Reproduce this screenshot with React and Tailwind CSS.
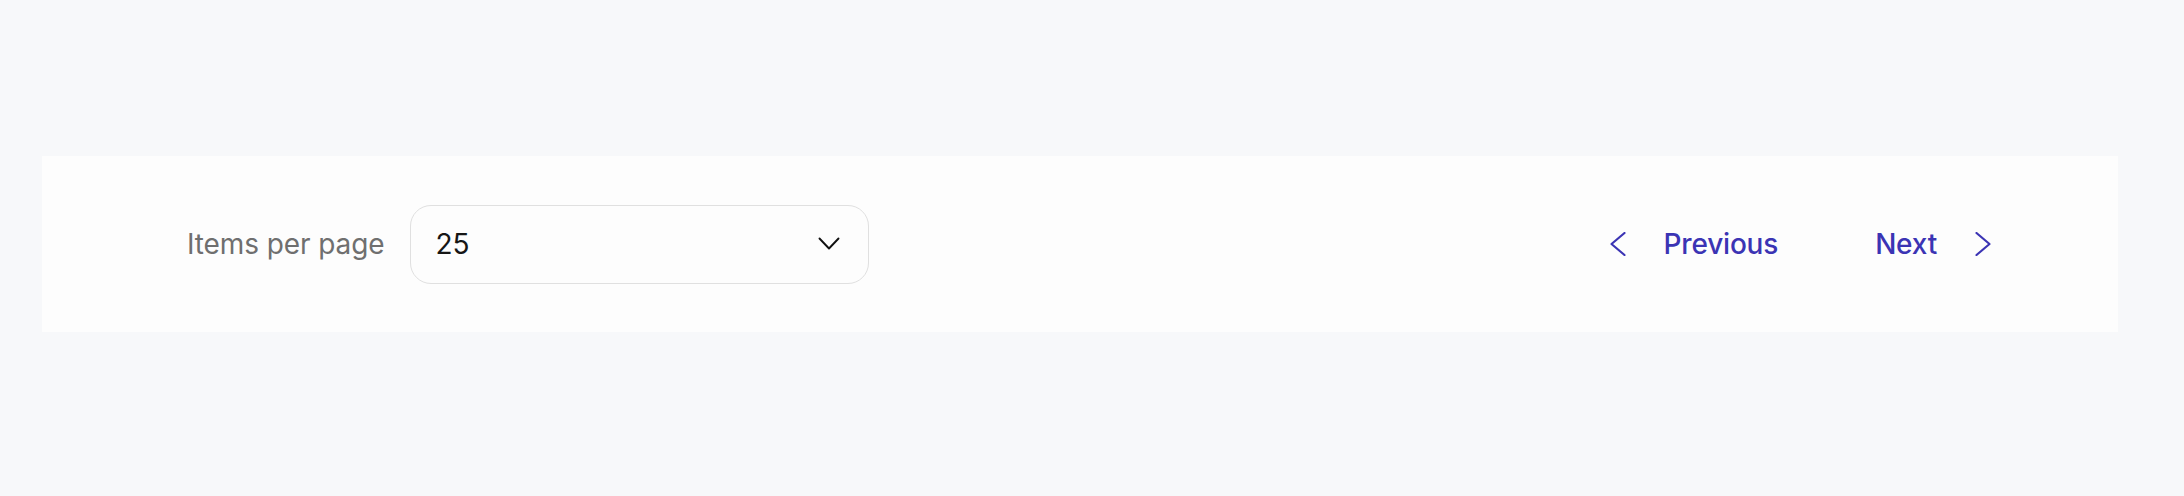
import React from "react";

function ChevronLeft() {
  return (
    <svg width="16" height="24" viewBox="0 0 16 24" fill="none" className="block">
      <polyline points="14.5,1 1.5,12 14.5,23" stroke="currentColor" strokeWidth="2.2" strokeLinecap="round" strokeLinejoin="round" />
    </svg>
  );
}

function ChevronRight() {
  return (
    <svg width="16" height="24" viewBox="0 0 16 24" fill="none" className="block">
      <polyline points="1.5,1 14.5,12 1.5,23" stroke="currentColor" strokeWidth="2.2" strokeLinecap="round" strokeLinejoin="round" />
    </svg>
  );
}

function ChevronDown() {
  return (
    <svg width="22" height="14" viewBox="0 0 22 14" fill="none" className="block">
      <polyline points="1.5,1.5 11,11.5 20.5,1.5" stroke="#111" strokeWidth="1.9" strokeLinecap="round" strokeLinejoin="round" />
    </svg>
  );
}

export default function App() {
  return (
    <div
      className="min-h-[496px] w-full bg-[#f7f8fa] pt-[156px]"
      style={{ fontFamily: "Inter, 'Noto Sans', sans-serif" }}
    >
      <div className="ml-[42px] flex h-[176px] w-[2076px] items-center justify-between bg-[#fdfdfd] pl-[145px] pr-[127px]">
        <div className="flex items-center gap-[26px]">
          <span className="text-[28px] leading-none tracking-[-0.1px] text-[#6f6f6f]">Items per page</span>
          <button
            type="button"
            className="flex h-[79px] w-[459px] items-center justify-between rounded-[21px] border-[1.5px] border-[#e0e0e0] bg-[#fdfdfd] pl-[24px] pr-[28px]"
          >
            <span className="text-[28px] leading-none text-[#161616]">25</span>
            <ChevronDown />
          </button>
        </div>
        <div className="flex items-center text-[#3b34b4]">
          <button type="button" className="flex items-center gap-[38px]">
            <ChevronLeft />
            <span className="text-[28px] font-medium leading-none tracking-[-0.2px]">Previous</span>
          </button>
          <button type="button" className="ml-[97px] flex items-center gap-[38px]">
            <span className="text-[28px] font-medium leading-none tracking-[-0.2px]">Next</span>
            <ChevronRight />
          </button>
        </div>
      </div>
    </div>
  );
}
